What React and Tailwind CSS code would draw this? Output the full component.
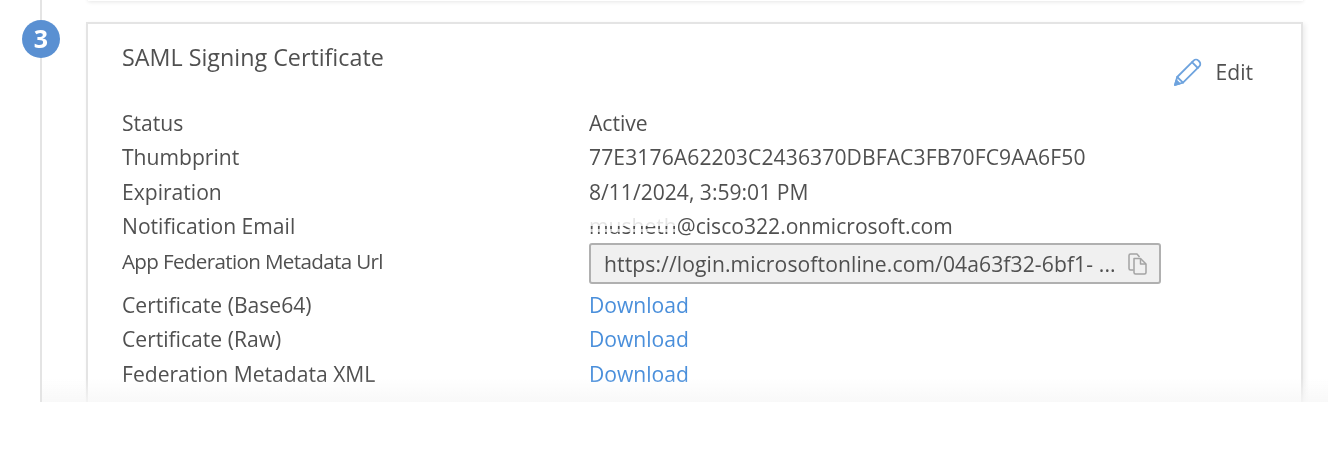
const ROWS_TOP = [
  ['Status', 'Active'],
  ['Thumbprint', <span className="tracking-[0.1px]">77E3176A62203C2436370DBFAC3FB70FC9AA6F50</span>],
  ['Expiration', '8/11/2024, 3:59:01 PM'],
]

const ROWS_BOTTOM = ['Certificate (Base64)', 'Certificate (Raw)', 'Federation Metadata XML']

function PencilIcon() {
  return (
    <svg width="30" height="30" viewBox="0 0 30 30" fill="none" stroke="#6ea3de" strokeWidth="1.8" strokeLinejoin="round" strokeLinecap="round">
      <path d="M2 28l2.2-8L20.600 3.600a3.400 3.400 0 0 1 4.800 0l.9.9a3.400 3.400 0 0 1 0 4.800L10 25.700z" />
      <path d="M4.200 20l5.800 5.700" />
      <path d="M19 5.200l5.800 5.800" />
      <path d="M2 28l1.300-4.600 3.300 3.300z" fill="#6ea3de" />
    </svg>
  )
}

function CopyIcon() {
  return (
    <svg width="19" height="22" viewBox="0 0 19 22" fill="none" stroke="#a3a3a3" strokeWidth="1.500" strokeLinejoin="round">
      <path d="M5.500 17H2.500a1.500 1.500 0 0 1-1.500-1.500V2.500A1.500 1.500 0 0 1 2.500 1h6.500l2.500 3" />
      <path d="M6 5.500h6.500L18 11v8.500a1.500 1.500 0 0 1-1.500 1.500h-9A1.500 1.500 0 0 1 6 19.500z" />
      <path d="M12.500 5.500V11H18" />
    </svg>
  )
}

function Row({ label, height = 'h-[34.3px]', children }) {
  return (
    <div className={`flex ${height}`}>
      <div className="w-[467px] h-[34.3px] flex items-center">{label}</div>
      <div className="flex-1">{children}</div>
    </div>
  )
}

export default function App() {
  return (
    <div className="w-[1328px] h-[450px] bg-white overflow-hidden font-['Open_Sans','Noto_Sans',sans-serif] text-[21.1px] text-[#505050]">
      <div className="relative h-[402px] overflow-hidden pl-[40px] blur-[0.4px]">
        <div className="relative h-full border-l-2 border-[#e4e4e4]">
          {/* remnant of the card above */}
          <div className="absolute left-[46px] top-[-20px] w-[1215px] h-[21px] bg-white shadow-[0_1px_4px_rgba(0,0,0,0.1)]" />

          {/* step badge */}
          <div className="absolute left-[-20px] top-[20px] w-[38px] h-[38px] rounded-full bg-[#5a90d2] text-white flex items-center justify-center text-[25px] font-bold">
            3
          </div>

          <div className="absolute left-[44px] top-[22px] w-[1217px] h-[420px] border-2 border-[#e4e4e4] bg-white shadow-[2px_2px_5px_rgba(0,0,0,0.08)] pl-[34px] pt-[15px]">
            <div className="flex justify-between h-[67px]">
              <div className="text-[23.3px] leading-[36px] whitespace-nowrap">SAML Signing Certificate</div>
              <div className="flex items-center gap-[13px] mt-[15px] mr-[48px] h-[36px]">
                <PencilIcon />
                <span>Edit</span>
              </div>
            </div>

            <div className="leading-[34px] whitespace-nowrap">
              {ROWS_TOP.map(([label, value]) => (
                <Row key={label} label={label}>{value}</Row>
              ))}

              <Row label="Notification Email">
                <span className="relative inline-block">
                  musheth
                  <span className="absolute left-0 right-0 top-[9px] h-[8px] bg-white/85" />
                  <span className="absolute left-0 right-0 top-[20px] h-[3px] bg-white/70" />
                </span>
                @cisco322.onmicrosoft.com
              </Row>

              <Row label={<span className="text-[20.6px] tracking-[-0.65px] pt-[1px]">App Federation Metadata Url</span>} height="h-[44.8px]">
                <div className="w-[572px] h-[41px] flex items-center justify-between pl-[13px] pr-[12px] bg-[#f0f0f0] border-2 border-[#b0b0b0] rounded-[3px]">
                  <span className="tracking-[0.1px]">https://login.microsoftonline.com/04a63f32-6bf1- ...</span>
                  <CopyIcon />
                </div>
              </Row>

              {ROWS_BOTTOM.map((label) => (
                <Row key={label} label={label}>
                  <span className="text-[#4a8fdb]">Download</span>
                </Row>
              ))}
            </div>
          </div>

          {/* fade at the bottom edge */}
          <div className="absolute left-0 right-0 bottom-0 h-[24px] bg-gradient-to-b from-transparent to-[#f7f7f7]/80" />
        </div>
      </div>
    </div>
  )
}
